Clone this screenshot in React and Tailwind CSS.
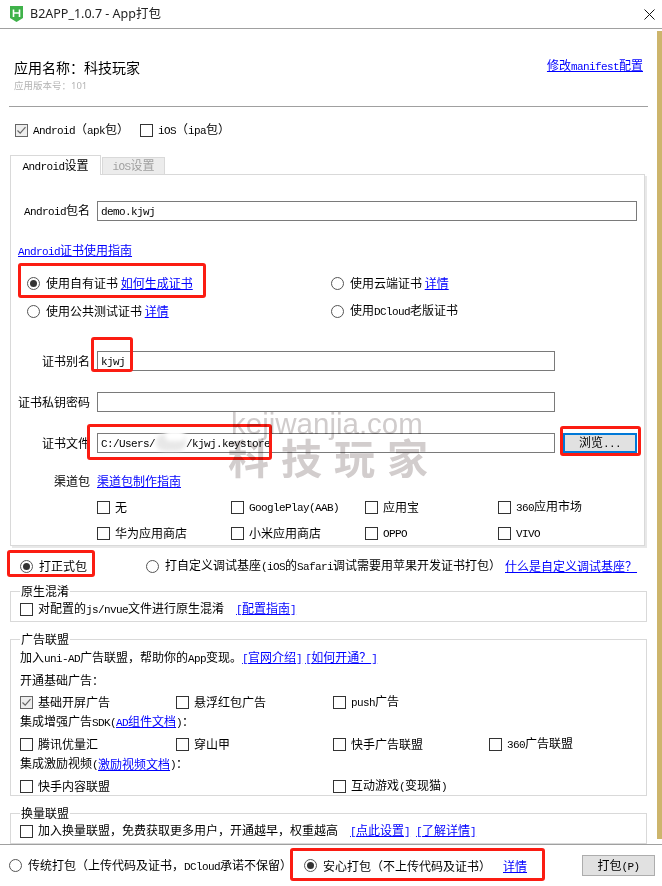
import React from "react";

function T({ children }) {
  const parts = String(children).split(/([\x21-\x7e ]+)/).filter(Boolean);
  return (
    <span className="whitespace-pre">
      {parts.map((p, i) =>
        /^[\x21-\x7e ]+$/.test(p) ? (
          <span key={i} className="font-['Liberation_Mono',monospace] text-[11px] tracking-[-0.6px]">{p}</span>
        ) : (
          <span key={i}>{p}</span>
        )
      )}
    </span>
  );
}

function L({ children, className = "" }) {
  return (
    <a className={"text-[#0000ff] underline whitespace-nowrap " + className}>
      <T>{children}</T>
    </a>
  );
}

function Box({ checked }) {
  return (
    <span className={"flex items-center justify-center w-[13px] h-[13px] shrink-0 border " + (checked ? "border-[#666666] bg-[#eeeeee]" : "border-[#333333] bg-white")}>
      {checked && (
        <svg width="11" height="11" viewBox="0 0 11 11" fill="none">
          <path d="M1.5 5.5 L4.2 8.2 L9.5 2.2" stroke="#666666" strokeWidth="1.2" />
        </svg>
      )}
    </span>
  );
}

function Check({ checked, children, className = "" }) {
  return (
    <div className={"flex items-center gap-[5px] h-[18px] whitespace-nowrap " + className}>
      <Box checked={checked} />
      <span>{children}</span>
    </div>
  );
}

function Radio({ checked, children, className = "" }) {
  return (
    <div className={"flex items-center gap-[6px] h-[20px] whitespace-nowrap " + className}>
      <span className="flex items-center justify-center w-[13px] h-[13px] shrink-0 rounded-full border border-[#555555] bg-white">
        {checked && <span className="w-[7px] h-[7px] rounded-full bg-[#333333]" />}
      </span>
      <span>{children}</span>
    </div>
  );
}

function Input({ children, className = "" }) {
  return (
    <div className={"flex items-center h-[20px] px-[3px] border border-[#7a7a7a] bg-white whitespace-nowrap " + className}>
      {children}
    </div>
  );
}

function Field({ label, children, className = "" }) {
  return (
    <div className={"flex items-center h-[20px] " + className}>
      <div className="w-[79px] text-right whitespace-nowrap"><T>{label}</T></div>
      <div className="ml-[7px] flex items-center">{children}</div>
    </div>
  );
}

function Group({ title, children, className = "" }) {
  return (
    <fieldset className={"w-[637px] border border-[#d9d9d9] " + className}>
      <legend className="ml-[9px] px-[1px] h-[16px] leading-[16px]"><T>{title}</T></legend>
      {children}
    </fieldset>
  );
}

function Mark({ className }) {
  return <div className={"absolute border-[3px] border-[#fb1c12] rounded-[3px] pointer-events-none " + className} />;
}

export default function App() {
  return (
    <div className="relative w-[662px] h-[886px] bg-white overflow-hidden flex flex-col text-[12px] text-black font-['Noto_Sans_CJK_SC',sans-serif]">
      <header className="h-[29px] shrink-0 flex items-center justify-between border-b border-[#a0a0a0] pl-[10px] pr-[7px]">
        <div className="flex items-center gap-[7px]">
          <svg width="13" height="16" viewBox="0 0 13 16">
            <path d="M0 0 H13 V12 L6.5 16 L0 12 Z" fill="#3fb24a" />
            <path d="M3.5 3.5 V11 M9.5 3.5 V11 M3.5 7 H9.5" stroke="#ffffff" strokeWidth="1.6" fill="none" />
          </svg>
          <span className="text-[12.5px] font-['Noto_Sans','Noto_Sans_CJK_SC',sans-serif] text-[#222222]">B2APP_1.0.7 - App打包</span>
        </div>
        <svg width="11" height="11" viewBox="0 0 11 11"><path d="M0.5 0.5 L10.5 10.5 M10.5 0.5 L0.5 10.5" stroke="#111111" strokeWidth="1" /></svg>
      </header>

      <div className="flex-1 flex min-h-0">
        <main className="w-[657px] shrink-0 pl-[10px]">
          <div className="flex items-start justify-between w-[637px] pl-[4px] pr-[4px] pt-[28px]">
            <div className="h-[20px] leading-[20px] text-[14px] whitespace-nowrap">应用名称：科技玩家</div>
            <L className="h-[16px] leading-[16px]">修改manifest配置</L>
          </div>
          <div className="mt-[3px] ml-[4px] h-[12px] leading-[12px] text-[9.5px] text-[#b4b4b4] font-['Noto_Sans','Noto_Sans_CJK_SC',sans-serif]">应用版本号：101</div>
          <div className="mt-[14px] -ml-px w-[639px] h-px bg-[#a0a0a0]" />

          <div className="mt-[13px] ml-[5px] h-[20px] flex items-center">
            <Check checked className="w-[125px]"><T>Android（apk包）</T></Check>
            <Check><T>iOS（ipa包）</T></Check>
          </div>

          <div className="mt-[15px] h-[19px] flex items-end relative z-10">
            <div className="w-[91px] h-[20px] -mb-px flex items-center justify-center border border-b-0 border-[#d9d9d9] bg-white"><T>Android设置</T></div>
            <div className="w-[63px] h-[18px] ml-px -mb-px flex items-center justify-center border border-[#d9d9d9] bg-[#ececec] text-[#a0a0a0]"><T>iOS设置</T></div>
          </div>

          <section className="w-[635px] h-[372px] border border-[#d9d9d9] shadow-[2px_2px_0_#e8e8e8]">
            <Field label="Android包名" className="mt-[26px]">
              <Input className="w-[540px]"><T>demo.kjwj</T></Input>
            </Field>
            <div className="mt-[20px] ml-[7px] h-[20px] flex items-center"><L>Android证书使用指南</L></div>

            <div className="mt-[12px] grid grid-cols-[304px_1fr] pl-[16px] gap-y-[8px]">
              <Radio checked>使用自有证书 <L>如何生成证书</L></Radio>
              <Radio>使用云端证书 <L>详情</L></Radio>
              <Radio>使用公共测试证书 <L>详情</L></Radio>
              <Radio><T>使用DCloud老版证书</T></Radio>
            </div>

            <Field label="证书别名" className="mt-[30px]">
              <Input className="w-[458px]"><T>kjwj</T></Input>
            </Field>
            <Field label="证书私钥密码" className="mt-[21px]">
              <Input className="w-[458px]" />
            </Field>
            <Field label="证书文件" className="mt-[21px]">
              <Input className="w-[458px]">
                <T>C:/Users/</T>
                <span className="inline-block w-[31px]" />
                <T>/kjwj.keystore</T>
              </Input>
              <button className="ml-[8px] w-[74px] h-[20px] border-2 border-[#0078d7] bg-[#e1e1e1] flex items-center justify-center"><T>浏览...</T></button>
            </Field>
            <Field label="渠道包" className="mt-[18px]">
              <L>渠道包制作指南</L>
            </Field>
            <div className="mt-[7px] ml-[86px] grid grid-cols-[134px_134px_133px_1fr] gap-y-[8px]">
              <Check>无</Check>
              <Check><T>GooglePlay(AAB)</T></Check>
              <Check>应用宝</Check>
              <Check><T>360应用市场</T></Check>
              <Check>华为应用商店</Check>
              <Check>小米应用商店</Check>
              <Check><T>OPPO</T></Check>
              <Check><T>VIVO</T></Check>
            </div>
          </section>

          <div className="mt-[10px] ml-[10px] flex items-center h-[20px]">
            <Radio checked className="w-[126px]">打正式包</Radio>
            <Radio className="w-[359px]"><T>打自定义调试基座(iOS的Safari调试需要用苹果开发证书打包）</T></Radio>
            <L>什么是自定义调试基座？</L>
          </div>

          <Group title="原生混淆" className="mt-[7px] h-[39px]">
            <Check className="ml-[9px] mt-[1px]">
              <T>对配置的js/nvue文件进行原生混淆</T>
              <L className="ml-[12px]">[配置指南]</L>
            </Check>
          </Group>

          <Group title="广告联盟" className="mt-[9px] h-[165px]">
            <div className="ml-[9px]">
              <div className="mt-[2px] h-[18px] flex items-center whitespace-nowrap">
                <T>加入uni-AD广告联盟，帮助你的App变现。</T>
                <L>[官网介绍]</L>
                <L className="ml-[3px]">[如何开通？]</L>
              </div>
              <div className="mt-[4px] h-[18px] flex items-center">开通基础广告：</div>
              <div className="mt-[4px] grid grid-cols-[156px_157px_156px_1fr]">
                <Check checked>基础开屏广告</Check>
                <Check>悬浮红包广告</Check>
                <Check><T>push广告</T></Check>
              </div>
              <div className="mt-[2px] h-[18px] flex items-center whitespace-nowrap">
                <T>集成增强广告SDK(</T><L>AD组件文档</L><T>)：</T>
              </div>
              <div className="mt-[4px] grid grid-cols-[156px_157px_156px_1fr]">
                <Check>腾讯优量汇</Check>
                <Check>穿山甲</Check>
                <Check>快手广告联盟</Check>
                <Check><T>360广告联盟</T></Check>
              </div>
              <div className="mt-[2px] h-[18px] flex items-center whitespace-nowrap">
                <T>集成激励视频(</T><L>激励视频文档</L><T>)：</T>
              </div>
              <div className="mt-[4px] grid grid-cols-[313px_1fr]">
                <Check>快手内容联盟</Check>
                <Check><T>互动游戏(变现猫)</T></Check>
              </div>
            </div>
          </Group>

          <Group title="换量联盟" className="mt-[9px] h-[39px]">
            <Check className="ml-[9px] mt-[1px]">
              <T>加入换量联盟，免费获取更多用户，开通越早，权重越高</T>
              <L className="ml-[12px]">[点此设置]</L>
              <L className="ml-[6px]">[了解详情]</L>
            </Check>
          </Group>
        </main>
        <div className="w-[5px] mt-[2px] mb-[5px] bg-[#cdb56c]" />
      </div>

      <footer className="h-[42px] shrink-0 border-t border-[#a0a0a0] pl-[9px] flex items-center">
        <Radio className="w-[295px]"><T>传统打包（上传代码及证书，DCloud承诺不保留）</T></Radio>
        <Radio checked className="w-[199px]">安心打包（不上传代码及证书）</Radio>
        <L className="w-[79px]">详情</L>
        <button className="w-[73px] h-[21px] border border-[#adadad] bg-[#e1e1e1] flex items-center justify-center"><T>打包(P)</T></button>
      </footer>

      <Mark className="left-[18px] top-[263px] w-[188px] h-[35px]" />
      <Mark className="left-[91px] top-[337px] w-[42px] h-[35px]" />
      <Mark className="left-[87px] top-[424px] w-[185px] h-[36px]" />
      <Mark className="left-[560px] top-[426px] w-[81px] h-[30px]" />
      <Mark className="left-[7px] top-[550px] w-[88px] h-[27px]" />
      <Mark className="left-[290px] top-[848px] w-[255px] h-[33px]" />

      <div className="absolute left-[156px] top-[434px] w-[30px] h-[17px] rounded-full bg-[#e8e8e8] blur-[2px] pointer-events-none" />
      <div className="absolute left-[165px] top-[431px] w-[20px] h-[10px] rounded-full bg-white blur-[2px] pointer-events-none" />

      <div className="absolute left-[231px] top-[405px] text-[29.5px] leading-[38px] text-[#d0cccc] font-['Liberation_Sans',sans-serif] mix-blend-multiply pointer-events-none whitespace-nowrap">kejiwanjia.com</div>
      <div className="absolute left-[228px] top-[433px] text-[41px] leading-[46px] tracking-[12px] font-bold text-[#d2cdcd] mix-blend-multiply pointer-events-none whitespace-nowrap">科技玩家</div>
    </div>
  );
}
